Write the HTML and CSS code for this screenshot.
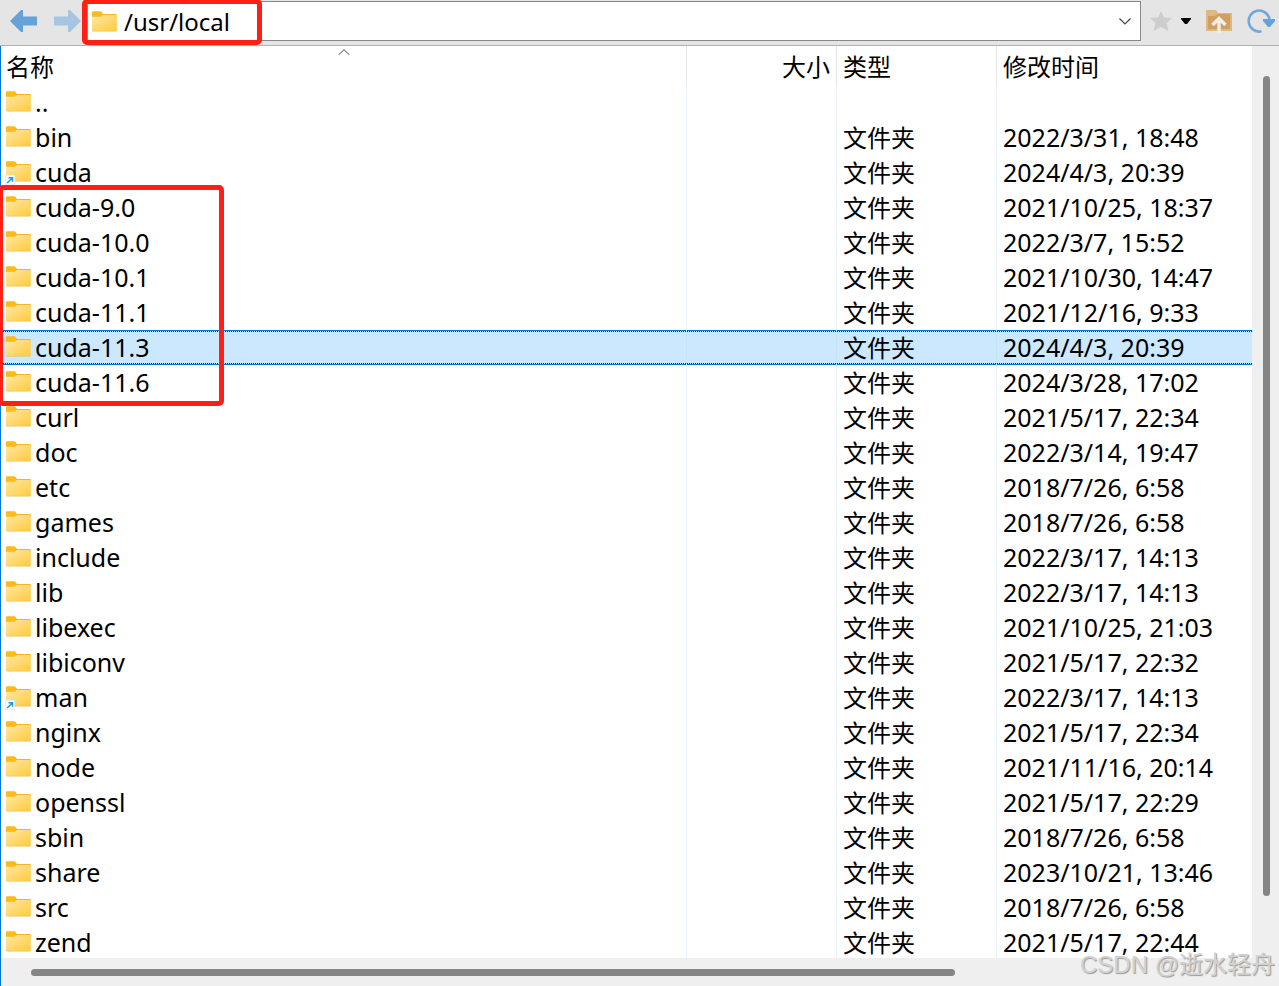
FILE: index.html
```html
<!DOCTYPE html>
<html lang="zh-CN">
<head>
    <meta charset="UTF-8">
    <meta name="viewport" content="width=device-width, initial-scale=1.0">
    <title>/usr/local</title>
    <link rel="stylesheet" href="styles.css">
</head>
<body>
    <!-- Shared icons -->
    <svg class="sprite" aria-hidden="true">
        <defs>
            <linearGradient id="folderFill" x1="0" y1="0" x2="1" y2="1">
                <stop offset="0" stop-color="#ffe8a3"/>
                <stop offset="1" stop-color="#ffca3d"/>
            </linearGradient>
        </defs>
        <symbol id="folder" viewBox="0 0 25 21">
            <path d="M1 .5h7.500q1 0 2.500 2.500H24q.8 0 .8 1v3H0V1.500q0-1 1-1z" fill="#f3b52a"/>
            <path d="M0 5.500h8.500q1 0 2.200-1.500H24q.8 0 .8 1v14q0 1-1 1H1q-1 0-1-1z" fill="url(#folderFill)"/>
            <path d="M1 .5h7.500q1 0 2 2.500-.8 2.500-2 2.500H0v-4q0-1 1-1z" fill="#fdba18"/>
            <path d="M.3 19.500q.2.800 1 .8h22.500q.8 0 1-.8" fill="none" stroke="#eab947" stroke-width=".6"/>
        </symbol>
        <symbol id="link" viewBox="0 0 10 10">
            <path d="M0 0h10v10H0z" fill="#fff" stroke="#ddd"/>
            <path d="M2.200 8L7 3.200M3.500 2.700h4v4" fill="none" stroke="#2196e3" stroke-width="1.500"/>
        </symbol>
    </svg>

    <div class="toolbar">
        <button class="tool" aria-label="后退">
            <svg width="27" height="22" viewBox="0 0 27 22"><path d="M0 11L11 0h2v6.500h14v9H13V22h-2z" fill="#65a2d8"/></svg>
        </button>
        <button class="tool" aria-label="前进">
            <svg width="27" height="22" viewBox="0 0 27 22"><path d="M27 11L16 0h-2v6.500H0v9h14V22h2z" fill="#a6c5e0"/></svg>
        </button>
        <div class="address">
            <svg class="folder"><use href="#folder"/></svg>
            <input type="text" class="path" value="/usr/local" aria-label="路径" spellcheck="false">
            <button class="drop" aria-label="历史路径">
                <svg width="12" height="7" viewBox="0 0 12 7"><path d="M.5.5L6 6 11.500.5" fill="none" stroke="#444" stroke-width="1.200"/></svg>
            </button>
            <div class="mark mark-path"></div>
        </div>
        <div class="tools">
            <button class="tool" aria-label="书签">
                <svg width="22" height="20" viewBox="0 0 22 20"><path d="M11 0l3 6.500 8 .5-5.500 5 2 8L11 16l-7.500 4 2-8L0 7l8-.5z" fill="#cdcdcd"/></svg>
            </button>
            <button class="tool" aria-label="书签菜单">
                <svg width="10" height="6" viewBox="0 0 10 6"><path d="M0 0h10v1L6 6H4L0 1z" fill="#000"/></svg>
            </button>
            <button class="tool tool-up" aria-label="上级目录">
                <svg width="26" height="24" viewBox="0 0 26 24">
                    <path d="M0 1h10l2 3h14v18H0z" fill="#dfb87e"/>
                    <path d="M2 7h7l2-2h13v15H2z" fill="#d29f60"/>
                    <path d="M13 24V10M6.500 16L13 9.500l6.500 6.500" fill="none" stroke="#f1eeea" stroke-width="3.500"/>
                </svg>
            </button>
            <button class="tool" aria-label="刷新">
                <svg width="28" height="24" viewBox="0 0 28 24">
                    <path d="M14.500 22.300A10.500 10.500 0 1 1 22.500 10" fill="none" stroke="#70a9dc" stroke-width="2.600"/>
                    <path d="M16 10h12v2l-5 6h-2l-5-6z" fill="#65a2d8"/>
                </svg>
            </button>
        </div>
    </div>

    <div class="panel">
        <div class="list">
            <table class="files">
                <colgroup>
                    <col>
                    <col class="col-size">
                    <col class="col-type">
                    <col class="col-time">
                </colgroup>
                <thead>
                    <tr>
                        <th class="sorted">名称<svg class="caret" viewBox="0 0 12 6"><path d="M.5 6L6 .7 11.500 6" fill="none" stroke="#444"/></svg></th>
                        <th class="size">大小</th>
                        <th>类型</th>
                        <th>修改时间</th>
                    </tr>
                </thead>
                <tbody>
                    <tr><td><div class="name"><svg class="folder"><use href="#folder"/></svg>..</div></td><td></td><td></td><td></td></tr>
                    <tr><td><div class="name"><svg class="folder"><use href="#folder"/></svg>bin</div></td><td></td><td class="type">文件夹</td><td>2022/3/31, 18:48</td></tr>
                    <tr><td><div class="name"><svg class="folder"><use href="#folder"/></svg><svg class="link"><use href="#link"/></svg>cuda</div></td><td></td><td class="type">文件夹</td><td>2024/4/3, 20:39</td></tr>
                    <tr><td><div class="name"><svg class="folder"><use href="#folder"/></svg>cuda-9.0</div></td><td></td><td class="type">文件夹</td><td>2021/10/25, 18:37</td></tr>
                    <tr><td><div class="name"><svg class="folder"><use href="#folder"/></svg>cuda-10.0</div></td><td></td><td class="type">文件夹</td><td>2022/3/7, 15:52</td></tr>
                    <tr><td><div class="name"><svg class="folder"><use href="#folder"/></svg>cuda-10.1</div></td><td></td><td class="type">文件夹</td><td>2021/10/30, 14:47</td></tr>
                    <tr><td><div class="name"><svg class="folder"><use href="#folder"/></svg>cuda-11.1</div></td><td></td><td class="type">文件夹</td><td>2021/12/16, 9:33</td></tr>
                    <tr class="selected"><td><div class="name"><svg class="folder"><use href="#folder"/></svg>cuda-11.3</div></td><td></td><td class="type">文件夹</td><td>2024/4/3, 20:39</td></tr>
                    <tr><td><div class="name"><svg class="folder"><use href="#folder"/></svg>cuda-11.6</div></td><td></td><td class="type">文件夹</td><td>2024/3/28, 17:02</td></tr>
                    <tr><td><div class="name"><svg class="folder"><use href="#folder"/></svg>curl</div></td><td></td><td class="type">文件夹</td><td>2021/5/17, 22:34</td></tr>
                    <tr><td><div class="name"><svg class="folder"><use href="#folder"/></svg>doc</div></td><td></td><td class="type">文件夹</td><td>2022/3/14, 19:47</td></tr>
                    <tr><td><div class="name"><svg class="folder"><use href="#folder"/></svg>etc</div></td><td></td><td class="type">文件夹</td><td>2018/7/26, 6:58</td></tr>
                    <tr><td><div class="name"><svg class="folder"><use href="#folder"/></svg>games</div></td><td></td><td class="type">文件夹</td><td>2018/7/26, 6:58</td></tr>
                    <tr><td><div class="name"><svg class="folder"><use href="#folder"/></svg>include</div></td><td></td><td class="type">文件夹</td><td>2022/3/17, 14:13</td></tr>
                    <tr><td><div class="name"><svg class="folder"><use href="#folder"/></svg>lib</div></td><td></td><td class="type">文件夹</td><td>2022/3/17, 14:13</td></tr>
                    <tr><td><div class="name"><svg class="folder"><use href="#folder"/></svg>libexec</div></td><td></td><td class="type">文件夹</td><td>2021/10/25, 21:03</td></tr>
                    <tr><td><div class="name"><svg class="folder"><use href="#folder"/></svg>libiconv</div></td><td></td><td class="type">文件夹</td><td>2021/5/17, 22:32</td></tr>
                    <tr><td><div class="name"><svg class="folder"><use href="#folder"/></svg><svg class="link"><use href="#link"/></svg>man</div></td><td></td><td class="type">文件夹</td><td>2022/3/17, 14:13</td></tr>
                    <tr><td><div class="name"><svg class="folder"><use href="#folder"/></svg>nginx</div></td><td></td><td class="type">文件夹</td><td>2021/5/17, 22:34</td></tr>
                    <tr><td><div class="name"><svg class="folder"><use href="#folder"/></svg>node</div></td><td></td><td class="type">文件夹</td><td>2021/11/16, 20:14</td></tr>
                    <tr><td><div class="name"><svg class="folder"><use href="#folder"/></svg>openssl</div></td><td></td><td class="type">文件夹</td><td>2021/5/17, 22:29</td></tr>
                    <tr><td><div class="name"><svg class="folder"><use href="#folder"/></svg>sbin</div></td><td></td><td class="type">文件夹</td><td>2018/7/26, 6:58</td></tr>
                    <tr><td><div class="name"><svg class="folder"><use href="#folder"/></svg>share</div></td><td></td><td class="type">文件夹</td><td>2023/10/21, 13:46</td></tr>
                    <tr><td><div class="name"><svg class="folder"><use href="#folder"/></svg>src</div></td><td></td><td class="type">文件夹</td><td>2018/7/26, 6:58</td></tr>
                    <tr><td><div class="name"><svg class="folder"><use href="#folder"/></svg>zend</div></td><td></td><td class="type">文件夹</td><td>2021/5/17, 22:44</td></tr>
                </tbody>
            </table>
        </div>
        <div class="scroll-y"><div class="thumb"></div></div>
        <div class="scroll-x"><div class="thumb"></div></div>
        <div class="mark mark-cuda"></div>
    </div>

    <div class="watermark">CSDN @逝水轻舟</div>
</body>
</html>
```

FILE: styles.css
```css
* {
    margin: 0;
    padding: 0;
    box-sizing: border-box;
}

body {
    display: flex;
    flex-direction: column;
    height: 100vh;
    overflow: hidden;
    font-family: "Noto Sans", "Noto Sans CJK SC", sans-serif;
    font-size: 25px;
    line-height: 35px;
    color: #000;
    background: #fff;
}

button {
    border: none;
    background: none;
    cursor: pointer;
}

svg {
    display: block;
}

.sprite {
    position: absolute;
    width: 0;
    height: 0;
}

.folder {
    flex: none;
    width: 25px;
    height: 21px;
}

/* Toolbar */
.toolbar {
    display: flex;
    align-items: center;
    gap: 17px;
    flex: none;
    height: 46px;
    padding: 1px 4px 4px 10px;
    background: #e5e5e5;
    border-bottom: 1px solid #b0b0b0;
}

.address {
    position: relative;
    display: flex;
    align-items: center;
    flex: 1;
    height: 40px;
    margin-left: -11px;
    padding: 0 9px 0 4px;
    background: #fff;
    border: 1px solid #888;
}

.path {
    flex: 1;
    min-width: 0;
    height: 36px;
    margin-left: 7px;
    border: none;
    outline: none;
    font: inherit;
    font-size: 24px;
    background: none;
}

.tools {
    display: flex;
    align-items: center;
    gap: 15px;
    margin-left: -8px;
}

.tools .tool + .tool {
    margin-left: -6px;
}

.tools .tool-up + .tool,
.tools .tool.tool-up {
    margin-left: 0;
}

/* File list */
.panel {
    position: relative;
    display: grid;
    grid-template-columns: 1fr 27px;
    grid-template-rows: 1fr 28px;
    flex: 1;
    min-height: 0;
    border-left: 1px solid #0078d7;
    background: #efefef;
}

.list {
    overflow: hidden;
    background: #fff;
}

.files {
    width: 100%;
    table-layout: fixed;
    border-spacing: 0;
}

.col-size {
    width: 150px;
}

.col-type {
    width: 160px;
}

.col-time {
    width: 255px;
}

th {
    height: 39px;
    padding: 3px 6px 1px;
    font-size: 24px;
    font-weight: normal;
    text-align: left;
    border-right: 1px solid #e5e5e5;
}

th.size {
    text-align: right;
}

td {
    height: 35px;
    padding: 0 6px;
    white-space: nowrap;
    border-right: 1px solid #e8f2fc;
}

th:first-child,
td:first-child {
    padding-left: 5px;
}

th:last-child,
td:last-child {
    border-right: none;
}

.sorted {
    position: relative;
}

.caret {
    position: absolute;
    top: 3px;
    left: 50%;
    width: 12px;
    height: 6px;
    margin-left: -6px;
}

.name {
    position: relative;
    display: flex;
    align-items: center;
    gap: 4px;
    height: 35px;
}

.name .folder {
    margin-bottom: 2px;
}

.link {
    position: absolute;
    left: -1px;
    bottom: 5px;
    width: 10px;
    height: 10px;
}

.type {
    font-size: 24px;
}

/* blue edge with a dotted focus line inside it */
.selected {
    background:
        linear-gradient(#0078d7, #0078d7) top / 100% 1px no-repeat,
        linear-gradient(#0078d7, #0078d7) bottom / 100% 1px no-repeat,
        repeating-linear-gradient(90deg, #222 0 1px, #cce8ff 1px 2px) 0 1px / 100% 1px no-repeat,
        repeating-linear-gradient(90deg, #222 0 1px, #cce8ff 1px 2px) 0 33px / 100% 1px no-repeat,
        #cce8ff;
}

.selected td {
    border-right-color: #c4e2fb;
}

/* Scrollbars */
.thumb {
    background: #858585;
    border-radius: 4px;
}

.scroll-y {
    padding: 30px 9px 0 11px;
}

.scroll-y .thumb {
    height: 93%;
}

.scroll-x {
    grid-column: 1 / -1;
    padding: 11px 0 0 30px;
}

.scroll-x .thumb {
    width: 74%;
    height: 7px;
}

/* Red highlight frames */
.mark {
    position: absolute;
    border: 5px solid #ff2015;
    border-radius: 5px;
    pointer-events: none;
}

.mark-path {
    top: -3px;
    left: -6px;
    width: 180px;
    height: 46px;
}

.mark-cuda {
    top: 139px;
    left: -3px;
    width: 226px;
    height: 221px;
}

.watermark {
    position: absolute;
    right: 4px;
    bottom: 4px;
    font-family: "Liberation Sans", "Noto Sans CJK SC", sans-serif;
    font-size: 24px;
    color: #d2d2d2;
    text-shadow: 1px 1px 1px #999;
}
```
